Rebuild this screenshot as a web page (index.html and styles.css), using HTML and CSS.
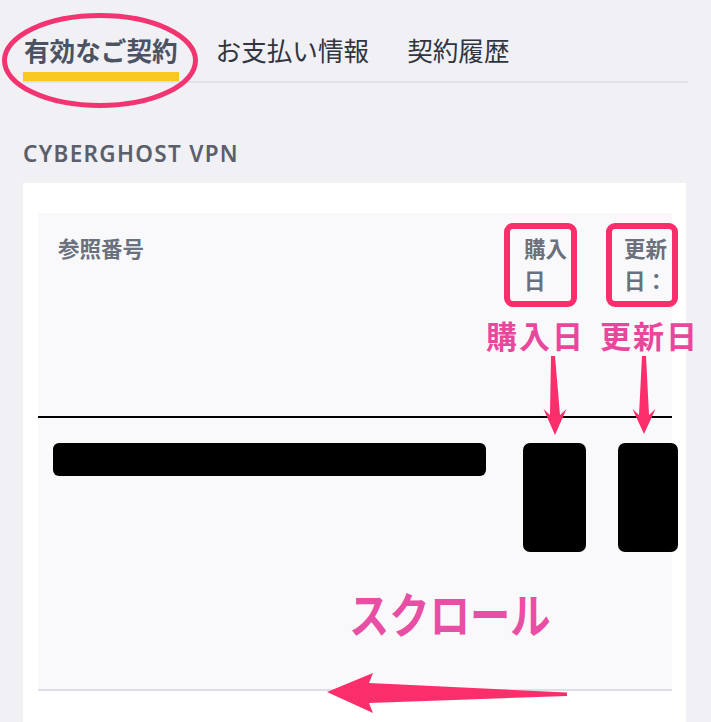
FILE: index.html
```html
<!DOCTYPE html>
<html lang="ja">
<head>
<meta charset="utf-8">
<title>有効なご契約</title>
<link rel="stylesheet" href="styles.css">
</head>
<body>
<div class="page">
  <nav class="tabs">
    <div class="tab active">有効なご契約</div>
    <div class="tab">お支払い情報</div>
    <div class="tab">契約履歴</div>
  </nav>
  <h2 class="product">CYBERGHOST VPN</h2>
  <section class="card">
    <div class="table">
      <div class="row head">
        <div class="cell c1">参照番号</div>
        <div class="cell c2">購入日</div>
        <div class="cell c3">更新日：</div>
      </div>
      <div class="row data">
        <div class="cell c1"><div class="redact bar"></div></div>
        <div class="cell c2"><div class="redact tall r2"></div></div>
        <div class="cell c3"><div class="redact tall r3"></div></div>
      </div>
    </div>
  </section>

  <svg class="marks" width="711" height="722" viewBox="0 0 711 722">
    <ellipse cx="100" cy="60.5" rx="95.5" ry="45" fill="none" stroke="#f23471" stroke-width="5"/>
    <polygon fill="#fa2e6a" points="551,356 555,356 560,415 566.5,409 555,435 543.5,409 550,415"/>
    <polygon fill="#fa2e6a" points="642,356 646,356 649,415 655.5,409 644,434 632.5,409 639,415"/>
    <polygon fill="#fa2e6a" points="327,692 373,673 369,683 567,692.5 567,696 369,703 373,713"/>
  </svg>
  <div class="hl hl1"></div>
  <div class="hl hl2"></div>
  <div class="note n1">購入日</div>
  <div class="note n2">更新日</div>
  <div class="scroll">スクロール</div>
</div>
</body>
</html>
```

FILE: styles.css
```css
html, body {
  margin: 0;
  padding: 0;
  background: #f0f0f5;
}
body {
  font-family: "Noto Sans CJK JP", "Noto Sans", sans-serif;
  overflow: hidden;
}
.page {
  position: relative;
  width: 711px;
  height: 722px;
  overflow: hidden;
}
.tabs {
  display: flex;
  gap: 36px;
  margin: 0 23px 0 23px;
  padding: 35px 0 0 0;
  border-bottom: 2px solid #e2e3e9;
}
.tab {
  font-size: 25.6px;
  line-height: 30px;
  color: #30353f;
  padding: 0 1px 16px 1px;
  white-space: nowrap;
}
.tab.active {
  font-weight: 700;
  color: #4b5261;
  padding-bottom: 7px;
  border-bottom: 9px solid #f7c81e;
}
.product {
  margin: 58px 0 16px 23px;
  font-family: "Noto Sans", sans-serif;
  font-size: 22.5px;
  line-height: 26px;
  font-weight: 600;
  letter-spacing: 1.3px;
  color: #5a5f6b;
}
.card {
  background: #ffffff;
  margin: 0 25px 0 23px;
  padding: 30px 14px 40px 15px;
}
.table {
  background: #f9f9fc;
  border-bottom: 2px solid #dedfe4;
}
.row {
  display: grid;
  grid-template-columns: 466px 100px 68px;
}
.row.head {
  height: 203px;
  border-bottom: 2px solid #000;
}
.row.data {
  height: 271px;
}
.cell {
  box-sizing: border-box;
}
.head .cell {
  padding: 19px 20px 0 20px;
  font-size: 21.5px;
  line-height: 32px;
  font-weight: 700;
  color: #6a707c;
}
.head .cell.c3 {
  padding-right: 0;
}
.data .cell {
  padding-top: 25px;
}
.redact {
  background: #000;
}
.bar {
  margin-left: 15px;
  width: 433px;
  height: 33px;
  border-radius: 6px;
}
.tall {
  height: 109px;
  border-radius: 7px;
}
.r2 {
  margin-left: 19px;
  width: 63px;
}
.r3 {
  margin-left: 14px;
  width: 60px;
}
.marks {
  position: absolute;
  left: 0;
  top: 0;
  pointer-events: none;
}
.hl {
  position: absolute;
  top: 223px;
  width: 73px;
  height: 84px;
  box-sizing: border-box;
  border: 6px solid #fa2e6a;
  border-radius: 9px;
}
.hl1 { left: 504px; }
.hl2 { left: 606px; width: 72px; }
.note {
  position: absolute;
  top: 319px;
  font-size: 31px;
  line-height: 31px;
  font-weight: 700;
  letter-spacing: 2px;
  color: #e8489b;
  white-space: nowrap;
}
.n1 { left: 486px; }
.n2 { left: 600px; }
.scroll {
  position: absolute;
  left: 349px;
  top: 584px;
  font-size: 48px;
  line-height: 56px;
  font-weight: 700;
  color: #e84ea3;
  white-space: nowrap;
  transform: scaleX(0.84);
  transform-origin: left top;
}
```
